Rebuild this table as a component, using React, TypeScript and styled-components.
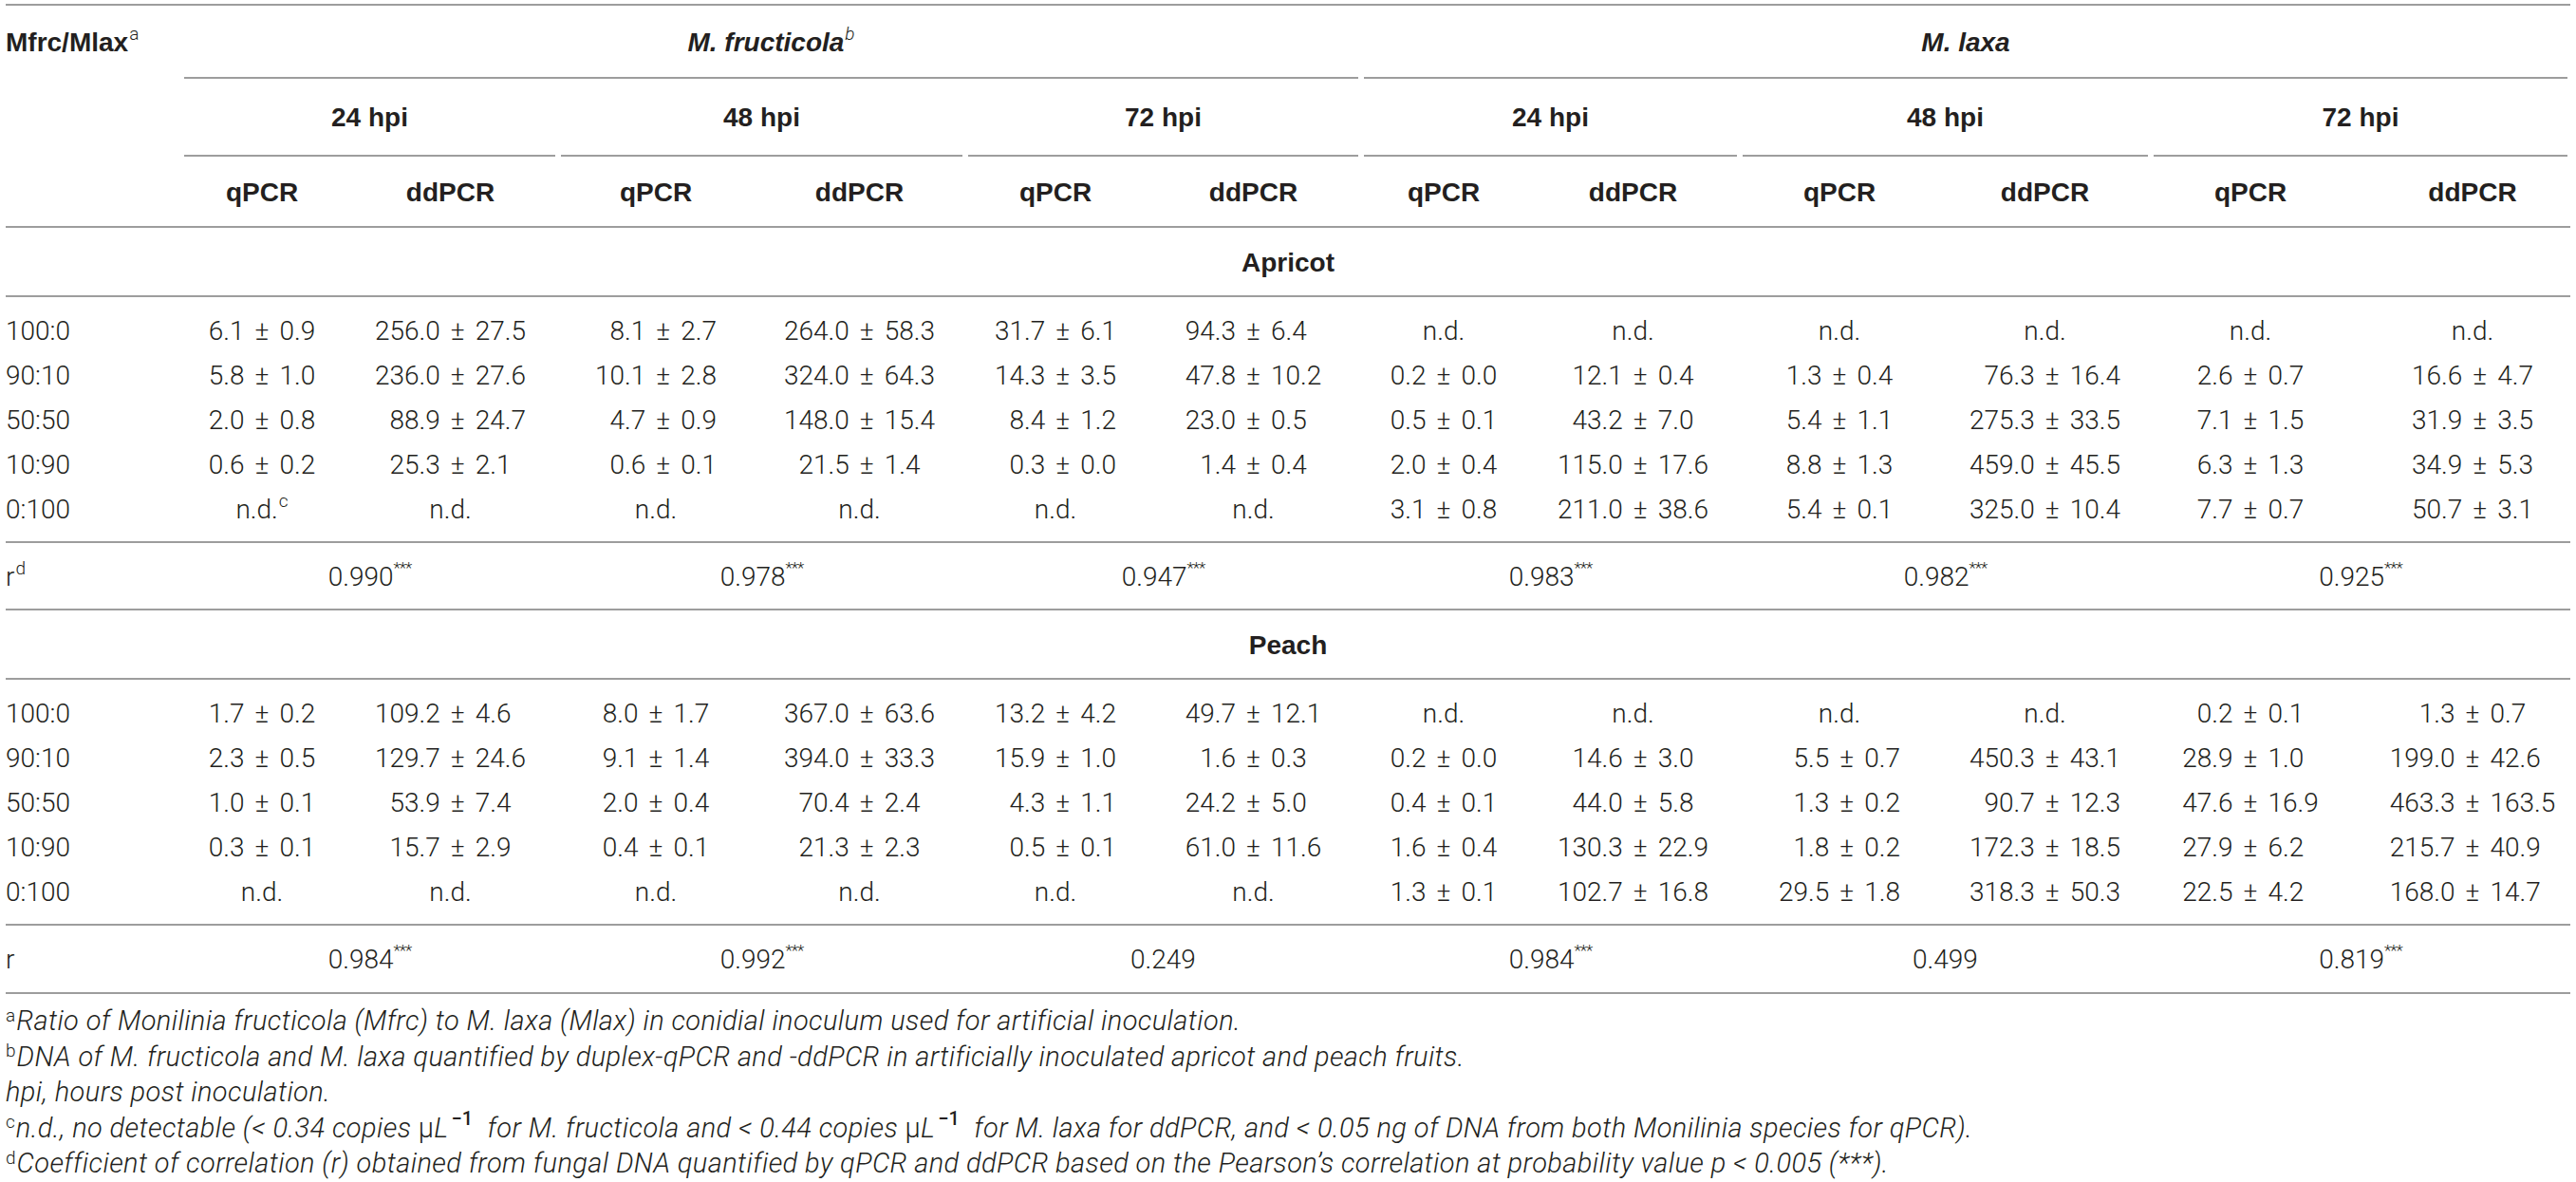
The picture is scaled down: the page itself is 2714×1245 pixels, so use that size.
import React from 'react';
import styled, { createGlobalStyle } from 'styled-components';

const RULE = '#9d9d9d';
const INK = '#231f20';

interface IRow {
	label: string;
	values: string[];
}

interface ISection {
	title: string;
	rLabel: string;
	rNote?: string;
	rows: IRow[];
	r: string[];
}

const sections: ISection[] = [
	{
		title: 'Apricot',
		rLabel: 'r',
		rNote: 'd',
		rows: [
			{label: '100:0', values: ['6.1 ± 0.9', '256.0 ± 27.5', '8.1 ± 2.7', '264.0 ± 58.3', '31.7 ± 6.1', '94.3 ± 6.4', 'n.d.', 'n.d.', 'n.d.', 'n.d.', 'n.d.', 'n.d.']},
			{label: '90:10', values: ['5.8 ± 1.0', '236.0 ± 27.6', '10.1 ± 2.8', '324.0 ± 64.3', '14.3 ± 3.5', '47.8 ± 10.2', '0.2 ± 0.0', '12.1 ± 0.4', '1.3 ± 0.4', '76.3 ± 16.4', '2.6 ± 0.7', '16.6 ± 4.7']},
			{label: '50:50', values: ['2.0 ± 0.8', '88.9 ± 24.7', '4.7 ± 0.9', '148.0 ± 15.4', '8.4 ± 1.2', '23.0 ± 0.5', '0.5 ± 0.1', '43.2 ± 7.0', '5.4 ± 1.1', '275.3 ± 33.5', '7.1 ± 1.5', '31.9 ± 3.5']},
			{label: '10:90', values: ['0.6 ± 0.2', '25.3 ± 2.1', '0.6 ± 0.1', '21.5 ± 1.4', '0.3 ± 0.0', '1.4 ± 0.4', '2.0 ± 0.4', '115.0 ± 17.6', '8.8 ± 1.3', '459.0 ± 45.5', '6.3 ± 1.3', '34.9 ± 5.3']},
			{label: '0:100', values: ['n.d.^c', 'n.d.', 'n.d.', 'n.d.', 'n.d.', 'n.d.', '3.1 ± 0.8', '211.0 ± 38.6', '5.4 ± 0.1', '325.0 ± 10.4', '7.7 ± 0.7', '50.7 ± 3.1']},
		],
		r: ['0.990***', '0.978***', '0.947***', '0.983***', '0.982***', '0.925***'],
	},
	{
		title: 'Peach',
		rLabel: 'r',
		rows: [
			{label: '100:0', values: ['1.7 ± 0.2', '109.2 ± 4.6', '8.0 ± 1.7', '367.0 ± 63.6', '13.2 ± 4.2', '49.7 ± 12.1', 'n.d.', 'n.d.', 'n.d.', 'n.d.', '0.2 ± 0.1', '1.3 ± 0.7']},
			{label: '90:10', values: ['2.3 ± 0.5', '129.7 ± 24.6', '9.1 ± 1.4', '394.0 ± 33.3', '15.9 ± 1.0', '1.6 ± 0.3', '0.2 ± 0.0', '14.6 ± 3.0', '5.5 ± 0.7', '450.3 ± 43.1', '28.9 ± 1.0', '199.0 ± 42.6']},
			{label: '50:50', values: ['1.0 ± 0.1', '53.9 ± 7.4', '2.0 ± 0.4', '70.4 ± 2.4', '4.3 ± 1.1', '24.2 ± 5.0', '0.4 ± 0.1', '44.0 ± 5.8', '1.3 ± 0.2', '90.7 ± 12.3', '47.6 ± 16.9', '463.3 ± 163.5']},
			{label: '10:90', values: ['0.3 ± 0.1', '15.7 ± 2.9', '0.4 ± 0.1', '21.3 ± 2.3', '0.5 ± 0.1', '61.0 ± 11.6', '1.6 ± 0.4', '130.3 ± 22.9', '1.8 ± 0.2', '172.3 ± 18.5', '27.9 ± 6.2', '215.7 ± 40.9']},
			{label: '0:100', values: ['n.d.', 'n.d.', 'n.d.', 'n.d.', 'n.d.', 'n.d.', '1.3 ± 0.1', '102.7 ± 16.8', '29.5 ± 1.8', '318.3 ± 50.3', '22.5 ± 4.2', '168.0 ± 14.7']},
		],
		r: ['0.984***', '0.992***', '0.249', '0.984***', '0.499', '0.819***'],
	},
];

const colWidths = [185, 170, 227, 206, 223, 190, 227, 174, 225, 210, 223, 210, 232];
const hours = ['24 hpi', '48 hpi', '72 hpi', '24 hpi', '48 hpi', '72 hpi'];

// width of a number in "ch": digits are 1ch, the point is narrower
const unit = (s: string) => [...s].reduce((w, ch) => w + (ch === '.' ? 0.47 : 1), 0);

const columnMetrics = (rows: IRow[]) => rows[0].values.map((_, c) => {
	let left = 0;
	let right = 0;
	rows.forEach(row => {
		const v = row.values[c];
		if (v.includes('±')) {
			const [m, s] = v.split(' ± ');
			left = Math.max(left, unit(m));
			right = Math.max(right, unit(s));
		}
	});
	return {left, right};
});

const Value: React.FC<{ v: string; left: number; right: number }> = ({v, left, right}) => {
	if (v.includes('±')) {
		const [m, s] = v.split(' ± ');
		return (
			<PlusMinus $left={left} $right={right}>
				<Mean>{m}</Mean>
				<Sign>±</Sign>
				<Sd>{s}</Sd>
			</PlusMinus>
		);
	}
	const [text, note] = v.split('^');
	return <>{text}{note && <Sup>{note}</Sup>}</>;
};

const Coefficient: React.FC<{ v: string }> = ({v}) => {
	const stars = v.endsWith('***');
	return <>{stars ? v.slice(0, -3) : v}{stars && <Stars>***</Stars>}</>;
};

export default function App() {
	return (
		<Page>
			<GlobalStyle/>
			<Table>
				<colgroup>
					{colWidths.map((w, i) => <col key={i} style={{width: w}}/>)}
				</colgroup>
				<thead>
					<Row $h={77}>
						<Head $align="left">Mfrc/Mlax<Sup>a</Sup></Head>
						<Head colSpan={6} $italic $rule="group">M. fructicola<Sup $italic>b</Sup></Head>
						<Head colSpan={6} $italic $rule="group">M. laxa</Head>
					</Row>
					<Row $h={82}>
						<Head/>
						{hours.map((h, i) => <Head key={i} colSpan={2} $rule="group">{h}</Head>)}
					</Row>
					<Row $h={75}>
						<Head $rule="full"/>
						{hours.map((_, i) => (
							<React.Fragment key={i}>
								<Head $rule="full">qPCR</Head>
								<Head $rule="full" $shift={i === 5 ? 26 : 0}>ddPCR</Head>
							</React.Fragment>
						))}
					</Row>
				</thead>
				{sections.map(section => {
					const metrics = columnMetrics(section.rows);
					const last = section.rows.length - 1;
					return (
						<tbody key={section.title}>
							<Row $h={73}>
								<SectionTitle colSpan={13}>{section.title}</SectionTitle>
							</Row>
							{section.rows.map((row, r) => {
								const edge = r === 0 ? 'first' : r === last ? 'last' : undefined;
								return (
									<Row key={row.label} $h={edge ? 59 : 47}>
										<Data $edge={edge} $align="left">{row.label}</Data>
										{row.values.map((v, c) => (
											<Data key={c} $edge={edge} $shift={c === 11 ? 26 : 0}>
												<Value v={v} left={metrics[c].left} right={metrics[c].right}/>
											</Data>
										))}
									</Row>
								);
							})}
							<Row $h={section.title === 'Apricot' ? 71 : 72}>
								<Corr $align="left">{section.rLabel}{section.rNote && <Sup>{section.rNote}</Sup>}</Corr>
								{section.r.map((v, i) => (
									<Corr key={i} colSpan={2}><Coefficient v={v}/></Corr>
								))}
							</Row>
						</tbody>
					);
				})}
			</Table>

			<Notes>
				<Note><NoteMark>a</NoteMark>Ratio of Monilinia fructicola (Mfrc) to M. laxa (Mlax) in conidial inoculum used for artificial inoculation.</Note>
				<Note><NoteMark>b</NoteMark>DNA of M. fructicola and M. laxa quantified by duplex-qPCR and -ddPCR in artificially inoculated apricot and peach fruits.</Note>
				<Note>hpi, hours post inoculation.</Note>
				<Note>
					<NoteMark>c</NoteMark>n.d., no detectable (&lt; 0.34 copies <Upright>μ</Upright>L<Power>−1</Power> for M. fructicola and &lt; 0.44 copies <Upright>μ</Upright>L<Power>−1</Power> for M. laxa for ddPCR, and &lt; 0.05 ng of DNA from both Monilinia species for qPCR).
				</Note>
				<Note><NoteMark>d</NoteMark>Coefficient of correlation (r) obtained from fungal DNA quantified by qPCR and ddPCR based on the Pearson’s correlation at probability value p &lt; 0.005 (***).</Note>
			</Notes>
		</Page>
	);
}


const GlobalStyle = createGlobalStyle`
  html, body {
    margin: 0;
    padding: 0;
    background: #ffffff;
  }

  body {
    font-family: Roboto, "Liberation Sans", Arial, sans-serif;
    font-weight: 300;
    color: ${INK};
  }
`;

const Page = styled.div`
  width: 2702px;
  padding: 4px 6px 0;
`;

const Table = styled.table`
  width: 2702px;
  table-layout: fixed;
  border-collapse: separate;
  border-spacing: 0;
  border-top: 2px solid ${RULE};
`;

interface IRowProps {
	$h: number;
}

const Row = styled.tr<IRowProps>`
  height: ${p => p.$h}px;
`;

type Rule = 'group' | 'full';

const rule = (kind?: Rule) => {
	if (kind === 'group') {
		return `background: linear-gradient(${RULE}, ${RULE}) no-repeat 50% 100% / calc(100% - 6px) 2px;`;
	}
	if (kind === 'full') {
		return `background: linear-gradient(${RULE}, ${RULE}) no-repeat 0 100% / 100% 2px;`;
	}
	return '';
};

interface IHeadProps {
	$align?: 'left' | 'center';
	$italic?: boolean;
	$rule?: Rule;
	$shift?: number;
}

const Head = styled.th<IHeadProps>`
  padding: 0 0 0 ${p => p.$shift ?? 0}px;
  font-family: "Liberation Sans", Arial, sans-serif;
  font-size: 28px;
  font-weight: 700;
  font-style: ${p => p.$italic ? 'italic' : 'normal'};
  line-height: 32px;
  text-align: ${p => p.$align ?? 'center'};
  vertical-align: middle;
  white-space: nowrap;
  color: ${INK};
  ${p => rule(p.$rule)}
`;

const SectionTitle = styled.td`
  padding: 0;
  font-family: "Liberation Sans", Arial, sans-serif;
  font-size: 28px;
  font-weight: 700;
  line-height: 32px;
  text-align: center;
  vertical-align: middle;
  color: ${INK};
  ${rule('full')}
`;

interface IDataProps {
	$edge?: 'first' | 'last';
	$align?: 'left' | 'center';
	$shift?: number;
}

const Data = styled.td<IDataProps>`
  padding: ${p => p.$edge === 'first' ? '12px' : '0'} 0 ${p => p.$edge === 'last' ? '12px' : '0'} ${p => p.$shift ?? 0}px;
  font-size: 28px;
  font-weight: 300;
  line-height: 32px;
  text-align: ${p => p.$align ?? 'center'};
  vertical-align: middle;
  white-space: nowrap;
  ${p => p.$edge === 'last' ? rule('full') : ''}
`;

const Corr = styled.td<{ $align?: 'left' | 'center' }>`
  padding: 0;
  font-size: 28px;
  font-weight: 300;
  line-height: 32px;
  text-align: ${p => p.$align ?? 'center'};
  vertical-align: middle;
  white-space: nowrap;
  ${rule('full')}
`;

interface IPlusMinusProps {
	$left: number;
	$right: number;
}

const PlusMinus = styled.span<IPlusMinusProps>`
  display: inline-grid;
  grid-template-columns: ${p => p.$left}ch auto ${p => p.$right}ch;
  align-items: baseline;
`;

const Mean = styled.span`
  text-align: right;
`;

const Sign = styled.span`
  margin: 0 11px;
`;

const Sd = styled.span`
  text-align: left;
`;

const Sup = styled.sup<{ $italic?: boolean }>`
  font-family: Roboto, "Liberation Sans", Arial, sans-serif;
  font-size: 19px;
  font-weight: 300;
  font-style: ${p => p.$italic ? 'italic' : 'normal'};
  line-height: 0;
  vertical-align: 0.62em;
  margin-left: 1px;
`;

const Stars = styled.sup`
  font-size: 17px;
  font-weight: 300;
  line-height: 0;
  vertical-align: 0.75em;
  letter-spacing: -1px;
`;

const Notes = styled.div`
  padding-top: 10px;
`;

const Note = styled.div`
  font-size: 29px;
  font-weight: 300;
  font-style: italic;
  letter-spacing: 0.4px;
  line-height: 37.5px;
  white-space: nowrap;
  color: ${INK};
`;

const NoteMark = styled.sup`
  font-size: 19px;
  font-style: normal;
  font-weight: 300;
  letter-spacing: 0;
  line-height: 0;
  vertical-align: 0.5em;
  margin-right: 1px;
`;

const Upright = styled.span`
  font-style: normal;
`;

const Power = styled.sup`
  font-size: 20px;
  font-style: normal;
  font-weight: 500;
  letter-spacing: 0;
  line-height: 0;
  vertical-align: 0.62em;
  margin: 0 8px 0 3px;
`;
